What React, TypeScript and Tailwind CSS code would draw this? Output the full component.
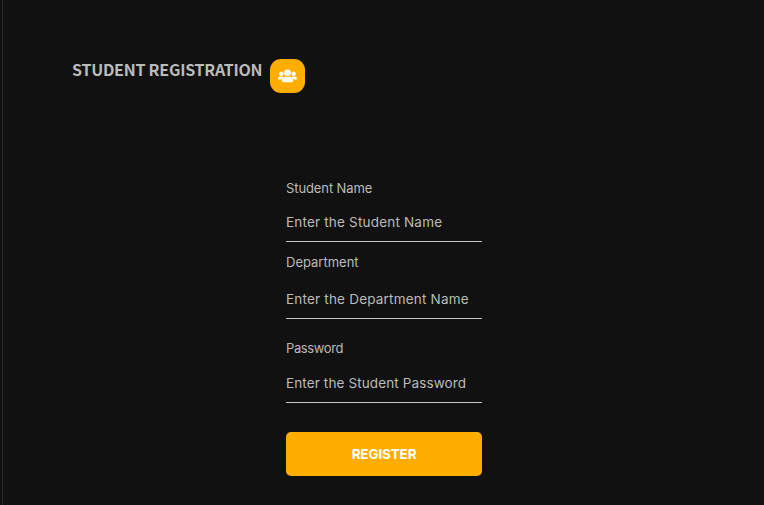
type FieldProps = {
  id: string;
  label: string;
  placeholder: string;
  type?: string;
  className: string;
  labelClass: string;
  inputClass: string;
};

function Field({ id, label, placeholder, type = "text", className, labelClass, inputClass }: FieldProps) {
  return (
    <div className={`flex flex-col items-start justify-between ${className}`}>
      <label htmlFor={id} className={`text-[13px] leading-5 whitespace-nowrap ${labelClass}`}>
        {label}
      </label>
      <input
        id={id}
        type={type}
        placeholder={placeholder}
        className={`h-[30px] w-full border-b border-[#c4c4c4] bg-transparent p-0 pb-[10px] text-[13.5px] leading-5 outline-none placeholder:text-[#bbbbbb] placeholder:opacity-100 ${inputClass}`}
      />
    </div>
  );
}

function GroupIcon() {
  return (
    <svg width="19" height="14" viewBox="0 0 19 14" fill="currentColor" aria-hidden="true">
      <circle cx="9.5" cy="3.8" r="3.4" />
      <circle cx="3.4" cy="4.8" r="2.2" />
      <circle cx="15.6" cy="4.8" r="2.2" />
      <path d="M0 9.5C0 8.2 0.9 7.4 2.1 7.4H4.1C4.7 7.4 5.1 7.6 5.5 7.9C4.4 8.5 3.7 9.4 3.5 10.6H0.8C0.3 10.6 0 10.1 0 9.5Z" />
      <path d="M19 9.5C19 8.2 18.1 7.4 16.9 7.4H14.9C14.3 7.4 13.9 7.6 13.5 7.9C14.6 8.5 15.3 9.4 15.5 10.6H18.2C18.7 10.6 19 10.1 19 9.5Z" />
      <path d="M3.9 11.2C3.9 9.1 5.4 7.8 7.3 7.8C8 7.8 8.5 8.1 9.5 8.1S11 7.8 11.7 7.8C13.6 7.8 15.1 9.1 15.1 11.2V11.8C15.1 12.6 14.5 13.2 13.8 13.2H5.2C4.5 13.2 3.9 12.6 3.9 11.8Z" />
    </svg>
  );
}

export default function App() {
  return (
    <div className="flex h-[505px] w-[764px] overflow-hidden bg-[#111111] pl-[2px] font-['Inter',sans-serif] text-[#bbbbbb]">
      <main className="flex flex-1 flex-col border-l border-[#292929]">
        <header className="flex h-[93px] items-start gap-2 pt-[59px] pl-[69px]">
          <h1 className="w-[190px] font-['Noto_Sans_CJK_SC',sans-serif] text-base leading-5 font-bold tracking-[-0.23px] whitespace-nowrap">
            STUDENT REGISTRATION
          </h1>
          <div className="flex h-[34px] w-[35px] items-center justify-center rounded-[11px] bg-[#ffae00] text-white">
            <GroupIcon />
          </div>
        </header>
        <form className="ml-[283px] flex w-[196px] flex-col pt-[85px]">
          <Field
            id="name"
            label="Student Name"
            placeholder="Enter the Student Name"
            className="h-[64px]"
            labelClass="tracking-[-0.1px]"
            inputClass="tracking-[0.19px]"
          />
          <Field
            id="department"
            label="Department"
            placeholder="Enter the Department Name"
            className="mt-[10px] h-[67px]"
            labelClass=""
            inputClass="tracking-[0.2px]"
          />
          <Field
            id="password"
            label="Password"
            type="password"
            placeholder="Enter the Student Password"
            className="mt-[19px] h-[65px]"
            labelClass="tracking-[-0.38px]"
            inputClass="tracking-[0.12px]"
          />
          <button
            type="button"
            className="mt-[29px] h-11 w-full rounded-[5px] bg-[#ffae00] text-[13.5px] font-bold tracking-[-0.15px] text-white"
          >
            REGISTER
          </button>
        </form>
      </main>
    </div>
  );
}
